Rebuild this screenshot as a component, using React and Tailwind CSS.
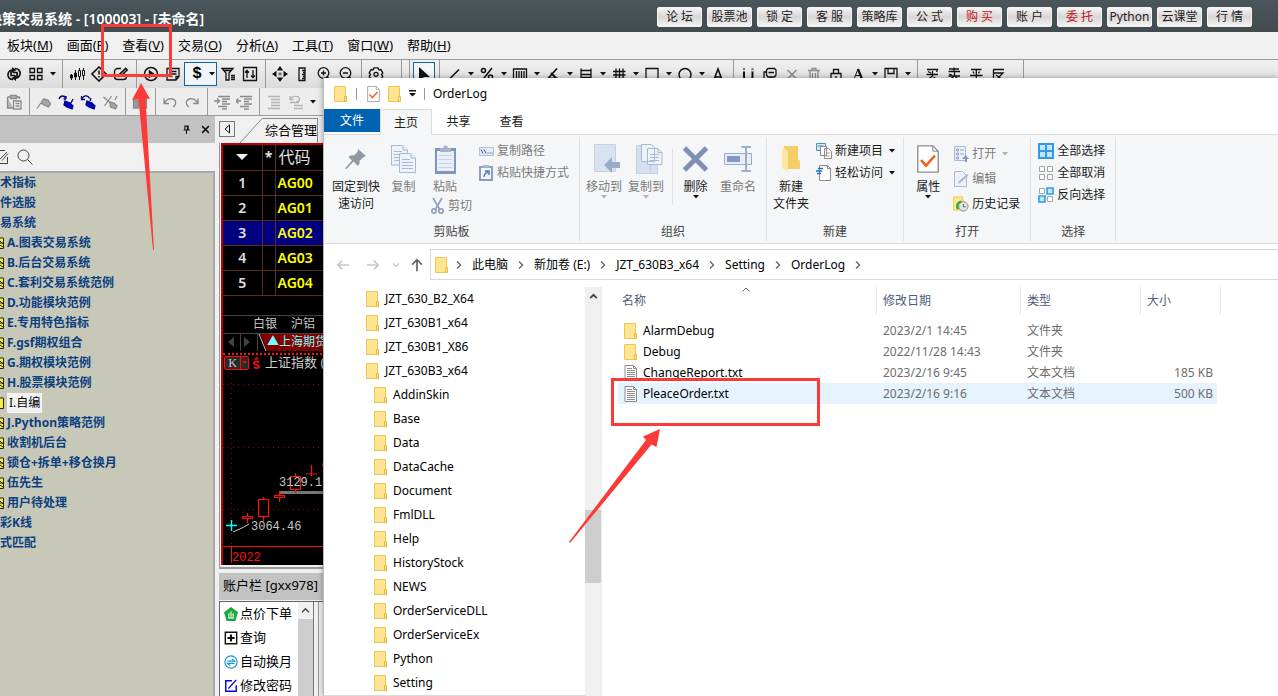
import React from 'react';

/* ---------- icon helpers ---------- */
function Svg({ size = 16, children, className = '', color = '#111', sw = 1.3 }) {
  return (
    <svg
      width={size}
      height={size}
      viewBox="0 0 16 16"
      fill="none"
      stroke={color}
      strokeWidth={sw}
      className={`block shrink-0 ${className}`}
      aria-hidden="true"
    >
      {children}
    </svg>
  );
}

const GREY = '#8a8a8a';
const S = 'none';

const toolIcons = {
  sync: (
    <Svg sw={1.7}>
      <path d="M7 13.500C3.500 13.500 1.500 11 2 8c.5-2.500 2.500-4 5-4M9 2.500c3.500 0 5.500 2.500 5 5.500-.5 2.500-2.500 4-5 4" />
      <path d="M5 4v5.500h4M11 12V6.500H7" />
      <path d="M6 1l4.500 3L6 7zM10 15l-4.500-3L10 9z" fill="#111" stroke={S} />
    </Svg>
  ),
  grid: (
    <Svg>
      <path d="M2 2.500h4.500v4H2zM9.500 2.500H14v4H9.500zM2 9.500h4.500v4H2zM9.500 9.500H14v4H9.500z" />
    </Svg>
  ),
  candles: (
    <Svg sw={1}>
      <path d="M2.500 8v6M6.500 4v10M10.500 2v12M14.500 2v12" />
      <path d="M1.500 9h2v3h-2zM5.500 7h2v4h-2z" fill="#111" />
      <path d="M9.500 4.500h2v6h-2zM13.500 4.500h2v5h-2z" fill="#eee" />
    </Svg>
  ),
  alert: (
    <Svg sw={1.6}>
      <path d="M8 1l7 7-7 7-7-7zM8 4.500v4M8 10v1.600" />
    </Svg>
  ),
  edit: (
    <Svg sw={1.4}>
      <path d="M8 2.500H4.500C3 2.500 1.500 4 1.500 5.500v5c0 2 1 3 3 3h6c2 0 3-1 3-3V9" />
      <path d="M6 10.500l.6-2.300 6-6 1.700 1.700-6 6z" fill="#999" />
    </Svg>
  ),
  play: (
    <Svg sw={1.5}>
      <circle cx="8" cy="8" r="6.500" />
      <path d="M6.500 5l4 3-4 3z" fill="#111" />
    </Svg>
  ),
  note: (
    <Svg>
      <path d="M2 2.500h12v8L11 14H2zM14 10.500h-3V14M4.500 5.500h7M4.500 8h7M4.500 10.500h3" />
    </Svg>
  ),
  filter: (
    <Svg>
      <path d="M2 2.500h11L9 7v7H6V7zM4 4.500h7M11 9.500h4M11 11.500h4M11 13.500h4" />
    </Svg>
  ),
  updown: (
    <Svg>
      <path d="M1.500 1.500h13v13h-13zM5 12V4.500M3 6.500l2-2 2 2M11 4v7.500M9 9.500l2 2 2-2" />
    </Svg>
  ),
  move: (
    <Svg>
      <path
        d="M8 0l3.200 4.500H4.800zM8 16l3.200-4.500H4.800zM0 8l4.500-3.200v6.400zM16 8l-4.500-3.200v6.400z"
        fill="#111"
        stroke={S}
      />
      <path d="M6.500 6.500h3v3h-3z" fill="#777" stroke={S} />
    </Svg>
  ),
  ruler: (
    <Svg>
      <path d="M5 2h6v12.500H5zM8 4.500h3M9 6.500h2M8 8.500h3M9 10.500h2M8 12.500h3" />
    </Svg>
  ),
  zoomin: (
    <Svg>
      <circle cx="7.500" cy="7" r="5.300" />
      <path d="M5 7h5M7.500 4.500v5M11.300 11l3.200 3.500" />
    </Svg>
  ),
  zoomout: (
    <Svg>
      <circle cx="7.500" cy="7" r="5.300" />
      <path d="M5 7h5M11.300 11l3.200 3.500" />
    </Svg>
  ),
  gear: (
    <Svg>
      <path d="M6 1.800h4l.8 2 2-.3 2 3.300L13.500 8.500l1.300 1.800-2 3.200-2-.3-.8 1.800H6l-.8-1.800-2 .3-2-3.200 1.300-1.800L1.200 6.800l2-3.300 2 .3z" />
      <circle cx="8" cy="8.300" r="2" />
    </Svg>
  ),
  cursor: (
    <Svg>
      <path d="M3 1l11 10H8l-5 4z" fill="#111" stroke={S} />
    </Svg>
  ),
  line: (
    <Svg sw={1.6}>
      <path d="M2.500 14L13 3.500" />
    </Svg>
  ),
  percent: (
    <Svg sw={1.6}>
      <circle cx="4.500" cy="4.500" r="2" />
      <circle cx="11.500" cy="11" r="2" />
      <path d="M13 2L3.500 14" />
    </Svg>
  ),
  bars: (
    <Svg>
      <path d="M1.500 13.500V3h13v10.500M4.500 5v9M7 5v9M9.500 5v9M12 5v9" />
    </Svg>
  ),
  angle: (
    <Svg sw={1.8}>
      <path d="M12 2.500L3 12.500h10M6 7l5 5" />
    </Svg>
  ),
  levels: (
    <Svg>
      <path d="M3 2.500v12M13 2.500v12M3 4.500h10M3 8.500h10M3 11.500h10" />
    </Svg>
  ),
  hash: (
    <Svg>
      <path d="M5 2.500v12M8.500 2.500v12M12 2.500v12M2 5.500h12.500M2 9h12.500M2 12.500h12.500" />
    </Svg>
  ),
  rect: (
    <Svg>
      <path d="M2 2.500h12v12H2z" />
    </Svg>
  ),
  circle: (
    <Svg sw={1.5}>
      <circle cx="8" cy="8.500" r="6" />
    </Svg>
  ),
  letter: (
    <Svg sw={1.6}>
      <path d="M3.500 15L8 3l4.500 12M5 11h6" />
    </Svg>
  ),
  magnet: (
    <Svg sw={2}>
      <path d="M4 2.500v8c0 5 8.500 5 8.500 0v-8" />
      <path d="M2.800 4.500h2.500M11.200 4.500h2.500" stroke="#ddd" />
    </Svg>
  ),
  copyminus: (
    <Svg>
      <path d="M6 2.500h6.500l1.500 1.500v5l-1.500 2H6L4.500 9V4zM4.500 6H2v7h7v-2M6.500 6.500h5.500" />
    </Svg>
  ),
  cross: (
    <Svg color={GREY} sw={1.6}>
      <path d="M3.500 4l9 9M12.500 4l-9 9" />
    </Svg>
  ),
  trash: (
    <Svg color={GREY}>
      <path d="M2 4.500h12M6 4.500v-2h4v2M4 4.500v10h8v-10M6.500 7v5M9.500 7v5" />
    </Svg>
  ),
  lock: (
    <Svg>
      <path d="M3 7.500h10v7H3zM5.500 7V3.500h5V7M8 10v2" />
    </Svg>
  ),
  bold: (
    <Svg sw={1}>
      <path d="M2 13.500h4M9 13.500h5M4 13L8 3l4 10M5.500 9.500h5" />
      <path d="M8 3l4 10" strokeWidth="2.200" />
    </Svg>
  ),
  save: (
    <Svg>
      <path d="M2 2.500h12v12H2zM5 3v4.500h6V3" />
    </Svg>
  ),
  buy: (
    <Svg>
      <path d="M3 3.500h10.500L12.500 6M4 5.500l3 1.500M2.500 8.500h11.500M8.500 5v5L3 14M9.500 11l4 3" />
    </Svg>
  ),
  sell: (
    <Svg>
      <path d="M3 3h10M8 1.500v4M2.500 5.500h11.500M3 8l3 1M2.500 10h11.500M8.500 6v4L3 14M9.500 11l4 3" />
    </Svg>
  ),
  flat: (
    <Svg>
      <path d="M3 3.500h10.500M2 9.500h12.500M8.300 3.500v11M5 5.500l1 2M11.500 5.500l-1 2" />
    </Svg>
  ),
  reverse: (
    <Svg>
      <path d="M3 3.500h11M3.500 3.500V14M4 7h9L6 14M6 9l7 5" />
    </Svg>
  ),
  paste: (
    <Svg color={GREY}>
      <path d="M1.500 3h3M10.500 3h3v2M1.500 3v11H7M4.500 1.500h6v3h-6z" fill="#b5b5b5" />
      <path d="M7.500 7h7.500v8H7.500zM9.500 9.500h4M9.500 12h4" fill="#eee" />
    </Svg>
  ),
  flag: (
    <Svg color={GREY}>
      <path d="M1 14.500L8 4.500M7.500 5l4.500 1 2.500 4-2 3-4.500-2-3-2z" fill="#a5a5a5" />
    </Svg>
  ),
  flagblue: (
    <Svg color="#000080">
      <path d="M1 5c1.500-4 6-4 7 0M8 5V2M8 5H5.500" />
      <path d="M7 7l5 2 3 3-1 3-5-2-3-2zM13 9l2-4" fill="#0000c8" />
    </Svg>
  ),
  flagback: (
    <Svg color="#000080">
      <path d="M1.500 2v3.500H5M2 5c1.500-4 6-4 7.500-.5" />
      <path d="M7 7l5 2 3 3-1 3-5-2-3-2zM10 7l1-3" fill="#0000c8" />
    </Svg>
  ),
  flagx: (
    <Svg color={GREY}>
      <path d="M1.500 3l8 7M9.500 2l-7 10M13 6l2-4" />
      <path d="M8 8l4 1 3 3-1.500 3-5-2z" fill="#a5a5a5" />
    </Svg>
  ),
  locker: (
    <Svg color={GREY}>
      <path d="M1.500 6h5v8h-5zM8.500 3h6v11h-6z" fill="#999" />
    </Svg>
  ),
  undo: (
    <Svg color={GREY}>
      <path d="M2 4.500v5h5M2.500 9c2-4.500 8-5.500 10.500-2.500 1.500 2 .5 5-2 6.500" />
    </Svg>
  ),
  redo: (
    <Svg color={GREY}>
      <path d="M14 4.500v5H9M13.500 9c-2-4.500-8-5.500-10.500-2.500-1.500 2-.5 5 2 6.500" />
    </Svg>
  ),
  indent: (
    <Svg color={GREY}>
      <path d="M4 2.500h12M8 5h8M8 7.500h5M8 10h8M4 12.500h9M0 7h5M3 4.500L5.500 7 3 9.500M8 15h5" />
    </Svg>
  ),
  outdent: (
    <Svg color={GREY}>
      <path d="M4 2.500h12M8 5h8M8 7.500h5M8 10h8M4 12.500h9M0 7h5M2.500 4.500L0 7l2.500 2.500M8 15h5" />
    </Svg>
  ),
  lines: (
    <Svg color="#b4b4b4">
      <path d="M2 2.500h12M5 5.500h9M5 8.500h9M5 11.500h9M2 14.500h12" />
    </Svg>
  ),
  revert: (
    <Svg color="#b4b4b4">
      <path d="M2 2v3.500h3.500M2.500 5c2-3.500 9-3.500 9 .5 0 1.500-1 2-3 2M2 8.500h9M6 11.500h9M6 14.500h9" />
    </Svg>
  ),
};

function Caret({ light }) {
  return (
    <svg width="6" height="4" viewBox="0 0 6 4" className="block shrink-0" aria-hidden="true">
      <path d="M0 0h6L3 3.500z" fill={light ? '#b0b0b0' : '#111'} />
    </svg>
  );
}

function Sep() {
  return (
    <div className="flex w-2 shrink-0 justify-center self-stretch">
      <span className="w-px bg-[#9a9a9a]" />
    </div>
  );
}

function Tool({ name }) {
  return (
    <button type="button" aria-label={name} className="flex w-[22px] shrink-0 items-center justify-center self-stretch">
      {toolIcons[name]}
    </button>
  );
}

function ToolCaret() {
  return (
    <button type="button" aria-label="展开" className="flex w-[11px] shrink-0 items-center justify-center self-stretch">
      <Caret />
    </button>
  );
}

function Tools({ items }) {
  return items.map((it, i) => {
    if (it === '|') return <Sep key={i} />;
    if (it === 'v') return <ToolCaret key={i} />;
    return <Tool key={i} name={it} />;
  });
}

/* ---------- trading application ---------- */
const topButtons = ['论 坛', '股票池', '锁 定', '客 服', '策略库', '公 式', '购 买', '账 户', '委 托', 'Python', '云课堂', '行 情'];
const menus = [['板块', 'M'], ['画面', 'P'], ['查看', 'V'], ['交易', 'O'], ['分析', 'A'], ['工具', 'T'], ['窗口', 'W'], ['帮助', 'H']];

function TitleBar() {
  return (
    <header className="flex h-8 shrink-0 items-center bg-linear-to-b from-[#4a565b] to-[#414b50] pt-[2px]">
      <h1 className="-ml-[12px] whitespace-nowrap pt-[2px] text-[14px] font-semibold text-white">决策交易系统 - [100003] - [未命名]</h1>
      <nav className="ml-auto flex gap-[5px] pr-[26px]">
        {topButtons.map((b) => (
          <button
            key={b}
            type="button"
            className={`flex h-5 w-[45px] items-center justify-center whitespace-nowrap rounded-xs border border-[#f4f4f4] bg-linear-to-b from-[#f6f4f4] via-[#d8d5d5] to-[#f4f4f4] text-[12px] ${
              b === '购 买' || b === '委 托' ? 'text-[#c0161c]' : 'text-[#222]'
            }`}
          >
            {b}
          </button>
        ))}
      </nav>
    </header>
  );
}

function MenuBar() {
  return (
    <nav className="flex h-[28px] shrink-0 items-center gap-[14px] border-b border-[#9c9c9c] bg-[#f0f0f0] pl-[7px] text-[13px] text-black">
      {menus.map(([t, k]) => (
        <button key={k} type="button" className="whitespace-nowrap">
          {t}(<span className="underline">{k}</span>)
        </button>
      ))}
    </nav>
  );
}

function Toolbars() {
  return (
    <div className="shrink-0 bg-[#e9e9e9]">
      <div className="flex h-7 items-center bg-linear-to-b from-[#f0f0f0] to-[#dcdcdc] pl-[3px]">
        <Tools items={['sync', 'grid', 'v', '|', 'candles', 'alert', 'edit', '|', 'play', 'note']} />
        <div className="flex h-6 w-[33px] items-center border border-[#0a64ad] bg-[#f2f5f8]">
          <button type="button" className="w-[24px] font-['Liberation_Mono',monospace] text-[16px] font-bold text-black">$</button>
          <Caret />
        </div>
        <Tools items={['filter', 'updown', '|', 'move', 'ruler', 'zoomin', 'zoomout', '|', 'gear']} />
        <div className="flex self-stretch pl-[10px]">
          <Sep />
          <Sep />
        </div>
        <div className="flex h-6 w-[22px] items-center justify-center border border-[#0a64ad] bg-[#f2f5f8]">
          {toolIcons.cursor}
        </div>
        <Tools
          items={[
            '|', 'line', 'v', 'percent', 'v', 'bars', 'v', 'angle', 'v', 'levels', 'v', 'hash', 'v', 'rect', 'v',
            'circle', 'v', 'letter', '|', 'magnet', 'copyminus', 'cross', 'trash', 'lock', 'bold', 'v', 'save', 'v',
            '|', 'buy', 'sell', 'flat', 'reverse',
          ]}
        />
        <div className="flex self-stretch pl-[10px]">
          <Sep />
        </div>
      </div>
      <div className="flex h-7 items-center border-b border-[#9c9c9c] bg-[#ededed] pl-[3px]">
        <Tools
          items={[
            'paste', '|', 'flag', 'flagblue', 'flagback', 'flagx', '|', 'locker', '|', 'undo', 'redo', '|',
            'indent', 'outdent', '|', 'lines', 'revert', 'v',
          ]}
        />
      </div>
    </div>
  );
}

const strategies = [
  ['术指标'], ['件选股'], ['易系统'],
  ['A.图表交易系统', 1], ['B.后台交易系统', 1], ['C.套利交易系统范例', 1], ['D.功能模块范例', 1],
  ['E.专用特色指标', 1], ['F.gsf期权组合', 1], ['G.期权模块范例', 1], ['H.股票模块范例', 1],
  ['I.自编', 2], ['J.Python策略范例', 1], ['收割机后台', 1], ['锁仓+拆单+移仓换月', 1], ['伍先生', 1],
  ['用户待处理', 1], ['彩K线'], ['式匹配'],
];

function TreeMark({ open }) {
  return (
    <svg width="5" height="12" viewBox="0 0 5 12" className="mr-[2px] block shrink-0" aria-hidden="true">
      <path d="M0 1h3.500v10.500H0" fill="#f6ee3c" stroke="#222" />
      {!open && <path d="M0 4l3 3M0 8l3 2M0 6h3" stroke="#222" strokeWidth="1" />}
    </svg>
  );
}

function StrategyTree() {
  return (
    <aside className="flex w-[215px] shrink-0 flex-col">
      <div className="flex h-[27px] shrink-0 items-center justify-end gap-[10px] bg-[#c2c2c2] pr-[5px]">
        <button type="button" aria-label="固定">
          <Svg size={9} sw={1.8}><path d="M3 9h11M5 9V2h6v7M9.500 2v7M8 9v7" /></Svg>
        </button>
        <button type="button" aria-label="关闭">
          <Svg size={9} sw={2.600}><path d="M2 2l12 12M14 2L2 14" /></Svg>
        </button>
      </div>
      <div className="flex h-[28px] shrink-0 items-center gap-2 bg-[#f0f0f0]">
        <svg width="9" height="16" viewBox="0 0 9 16" fill="none" stroke="#444" aria-hidden="true">
          <path d="M0 1.500h5M7.500 8v6.500H0M0 10l7-7M2 11.500l6-7" />
        </svg>
        <Svg color="#444" sw={1}><circle cx="6.500" cy="6.500" r="5.500" /><path d="M10.500 10.500l5 5" /></Svg>
      </div>
      <ul className="min-h-0 flex-1 overflow-hidden border-r-2 border-t-2 border-[#a8a8a8] bg-[#c8c8b8] text-[12px] font-bold text-[#0a3f80]">
        {strategies.map(([name, kind]) => (
          <li key={name} className="flex h-5 items-center whitespace-nowrap">
            {kind && <TreeMark open={kind === 2} />}
            <span className={kind === 2 ? 'bg-[#f2f2f2] px-[2px] leading-5 font-normal text-black' : ''}>
              {name}
            </span>
          </li>
        ))}
      </ul>
    </aside>
  );
}

const contracts = ['AG00', 'AG01', 'AG02', 'AG03', 'AG04'];

function QuoteTable() {
  return (
    <table className="w-full table-fixed border-collapse text-[14px]">
      <colgroup>
        <col className="w-[39px]" />
        <col className="w-[13px]" />
        <col />
      </colgroup>
      <thead>
        <tr className="h-[25px] text-[#e0e0e0]">
          <th className="border-b border-r border-[#5a3018] p-0">
            <svg width="12" height="6" viewBox="0 0 12 6" className="mx-auto" aria-label="排序"><path d="M0 0h12L6 6z" fill="#eee" /></svg>
          </th>
          <th className="border-b border-r border-[#5a3018] p-0 leading-none">*</th>
          <th className="border-b border-[#5a3018] p-0 pl-[3px] text-left text-[16px] leading-none font-normal">代码</th>
        </tr>
      </thead>
      <tbody>
        {contracts.map((c, i) => (
          <tr key={c} className={`h-[25px] ${i === 2 ? 'bg-[#000080]' : ''}`}>
            <td className="border-b border-r border-[#5a3018] p-0 text-center leading-none font-semibold text-[#e0e0e0]">{i + 1}</td>
            <td className="border-b border-r border-[#5a3018] p-0" />
            <td className="border-b border-[#5a3018] p-0 pl-[2px] leading-none font-semibold text-[#ffff00]">{c}</td>
          </tr>
        ))}
      </tbody>
    </table>
  );
}

function IndexChart() {
  return (
    <svg width="100%" height="194" className="block font-['Liberation_Mono',monospace] text-[12px]" aria-label="上证指数">
      <g stroke="#a00000" strokeDasharray="1 4">
        <path d="M8.500 2v188M0 13.500h1000M0 76.500h1000M0 138.500h1000" />
      </g>
      <path d="M56 120h900v3H56z" fill="#777" />
      <g stroke="#ff1010" strokeWidth="1.200" fill="#000">
        <path d="M24.500 142v10M40.500 126v24M56.500 120v11M72.500 102v20M88.500 94v11M83 103h11M100 92v4" />
        <path d="M19.500 145.500h10v2h-10zM35.500 128.500h10v17h-10zM51.500 124.500h10v2h-10zM67.500 105.500h10v13h-10z" />
      </g>
      <path d="M0 175.500h1000M8.500 176v16" stroke="#ff1010" />
      <path d="M3 154.500h11M8.500 149v11" stroke="#00ffff" strokeWidth="1.500" />
      <path d="M10 161l9-4 7-4" stroke="#ccc" fill="none" />
      <text x="56" y="115" fill="#c8c8c8">3129.1</text>
      <text x="28" y="159" fill="#c8c8c8">3064.46</text>
      <text x="9" y="190" fill="#ff1010">2022</text>
    </svg>
  );
}

function MarketPane() {
  return (
    <section className="shrink-0">
      <div className="flex h-[27px] items-end bg-[#f0f0f0]">
        <button type="button" aria-label="向左" className="mb-[6px] flex h-4 w-4 items-center justify-center border border-[#777] bg-[#f0f0f0]">
          <svg width="6" height="10" viewBox="0 0 6 10" fill="none" stroke="#111"><path d="M5.500 1v8L1 5z" /></svg>
        </button>
        <svg width="30" height="25" viewBox="0 0 30 25" fill="none" stroke="#888" aria-hidden="true"><path d="M5 25L27 .5h3" /></svg>
        <button type="button" className="flex h-[25px] items-center whitespace-nowrap border-t border-r border-[#888] text-[13px] text-black">综合管理</button>
      </div>
      <div className="border-b-2 border-l border-[#999] pb-[2px] pl-px">
        <div className="overflow-hidden border-t-2 border-l-2 border-[#c00000] bg-black">
          <QuoteTable />
          <div className="h-5 border-b border-[#444]" />
          <div className="flex h-[18px] items-center gap-[14px] border-b border-[#444] pl-[30px] text-[12px] text-[#c8c8c8]">
            <span className="whitespace-nowrap">白银</span>
            <span className="whitespace-nowrap">沪铝</span>
          </div>
          <div className="flex h-[17px] text-[#333]">
            <svg width="35" height="17" fill="none" className="block shrink-0" aria-hidden="true">
              <path d="M5 8l6-5v10zM27 8l-6-5v10z" fill="#444" />
              <path d="M17.500 0v17M34.500 0v17" stroke="#444" />
            </svg>
            <svg width="9" height="17" className="block shrink-0" aria-hidden="true">
              <path d="M2 0h7v17z" fill="#800000" /><path d="M1 0l7 17" stroke="#ccc" />
            </svg>
            <span className="flex flex-1 items-center whitespace-nowrap bg-[#800000] text-[12px] leading-none text-[#7ff]">▲上海期货</span>
          </div>
          <div className="mt-[2px] flex h-[18px] items-center border-t-2 border-dotted border-[#ff1010] pl-px">
            <button type="button" className="flex h-[14px] items-center rounded-xs border border-[#f01010] bg-[#2a2a2a] font-['Liberation_Serif',serif] text-[12px] leading-none text-[#ccc]">
              <span className="w-[15px]">K</span>
              <span className="flex h-full w-2 items-center justify-center border-l border-[#f01010]">
                <svg width="5" height="3"><path d="M0 0h5L2.500 3z" fill="#f01010" /></svg>
              </span>
            </button>
            <svg width="7" height="12" viewBox="0 0 7 12" fill="none" stroke="#ff1010" className="mx-1 block shrink-0" aria-hidden="true">
              <path d="M3.500 0l3 2.500h-6z" fill="#ff1010" stroke="none" />
              <path d="M6 5.500C5 4 1 4 1 6s5 1.500 5 3.500S2 11.500 1 10" strokeWidth="1.800" />
            </svg>
            <span className="whitespace-nowrap pl-px text-[13px] leading-none text-[#ccc]">上证指数 (日线)</span>
          </div>
          <IndexChart />
        </div>
      </div>
    </section>
  );
}

const accountItems = [
  ['点价下单', <Svg key="a" size={14} className="shrink-0"><path d="M8 0l8 6-3 10H3L0 6z" fill="#18a83c" stroke="none" /><path d="M4.500 12.500h7M5.500 7v4M8 5v6M10.500 7v4" stroke="#fff" /></Svg>],
  ['查询', <Svg key="b" size={14} sw={1.6}><path d="M1.500 1.500h13v13h-13z" /><path d="M4 8h8M8 4v8" strokeWidth="2.400" /></Svg>],
  ['自动换月', <Svg key="c" size={14} color="#1296db"><circle cx="8" cy="8" r="7" /><path d="M4 7h8l-3-2.500M12 9.500H4L7 12" /></Svg>],
  ['修改密码', <Svg key="d" size={14} color="#0000e0" sw={1.6}><path d="M9 2H2v12h12V7M5 11l9-10" /></Svg>],
];

function AccountPane() {
  return (
    <section className="flex min-h-0 flex-1 flex-col pt-1">
      <h2 className="flex h-[27px] shrink-0 items-center whitespace-nowrap bg-[#c2c2c2] pl-1 text-[13px] text-black">账户栏 [gxx978]</h2>
      <div className="mt-px flex min-h-0 flex-1 border-t border-l border-[#666]">
        <ul className="w-[78px] shrink-0 overflow-hidden bg-white text-[13px] text-black">
          {accountItems.map(([name, icon]) => (
            <li key={name} className="flex h-6 items-center gap-[2px] whitespace-nowrap pl-1">
              {icon}
              {name}
            </li>
          ))}
        </ul>
        <div className="flex w-4 shrink-0 flex-col border-r border-[#777] bg-[#cdcdcd]">
          <span className="flex h-[17px] items-center justify-center bg-[#f0f0f0]">
            <Svg size={9} color="#444" sw={2.500}><path d="M2 11l6-6 6 6" /></Svg>
          </span>
        </div>
        <div className="ml-1 flex-1 border-l border-[#999]" />
      </div>
    </section>
  );
}

/* ---------- file explorer ---------- */
function Folder({ className = '' }) {
  return (
    <svg width="14" height="16" viewBox="0 0 14 16" className={`block shrink-0 ${className}`} aria-hidden="true">
      <path d="M.5.5h11v15H.5z" fill="#ffe591" stroke="#ecc94e" />
      <path d="M10.500 10.500h2v5h-2z" fill="#ffe08a" stroke="#e6bd3a" />
    </svg>
  );
}

function TextFile() {
  return (
    <svg width="14" height="16" viewBox="0 0 14 16" fill="none" stroke="#8b8b8b" className="block shrink-0" aria-hidden="true">
      <path d="M1 .5h8.500l3 3v12H1z" fill="#fff" />
      <path d="M9.500.5v3h3M3 3.500h5M3 5.500h8M3 7.500h8M3 9.500h8M3 11.500h8M3 13.500h8" />
    </svg>
  );
}

function Page({ w = 14, h = 16, check }) {
  return (
    <svg width={w} height={h} viewBox="0 0 22 28" fill="none" className="block shrink-0" aria-hidden="true">
      <path d="M.8.800h15l5.400 5.400v21H.8z" fill="#fff" stroke="#8b8b8b" strokeWidth="1.300" />
      <path d="M15.800.800v5.400h5.400" stroke="#8b8b8b" />
      {check && <path d="M4 15l5 5.500 9-10" stroke="#f1601c" strokeWidth="2.600" />}
    </svg>
  );
}

const ribbonIcons = {
  pin: (
    <svg width="22" height="22" viewBox="0 0 22 22"><path d="M13 1l8 7-3 1.500-3.500 3.500c.5 2-.5 4-1.500 5l-4.500-4.500L1.500 21 0 20.500l7-8L3.500 9C5 7.500 7 7 9 7.500L12.500 4z" fill="#8f99a3" /></svg>
  ),
  copy: (
    <svg width="25" height="28" viewBox="0 0 25 28" fill="#eef3fa" stroke="#a9b8d3">
      <path d="M.5.500H12l4.500 4.500v15H.5z" /><path d="M12 .5V5h4.500M3 6.500h8M3 9.500h8M3 12.500h8M3 15.500h8" />
      <path d="M8.500 8.500H20l4.500 4.500v14.500h-16z" /><path d="M20 8.500V13h4.500M11 14.500h8M11 17.500h11M11 20.500h11M11 23.500h11" />
    </svg>
  ),
  paste: (
    <svg width="21" height="29" viewBox="0 0 21 29"><path d="M0 3h21v26H0z" fill="#7f95bc" /><path d="M2 6h17v20H2z" fill="#e9eff8" /><path d="M5 3h3a2.500 2.500 0 015 0h3v4H5z" fill="#a7b4ca" /><path d="M4 10.500h13M4 14.500h13M4 18.500h13M4 22.500h13" stroke="#c3d0e4" /></svg>
  ),
  moveTo: (
    <svg width="36" height="30" viewBox="-8 0 36 30"><path d="M.5.500h21v27H.5z" fill="#d8e2f1" stroke="#c3d0e6" /><path d="M10 21l8-8v5h8v6h-8v5z" fill="#9aacca" /></svg>
  ),
  copyTo: (
    <svg width="33" height="30" viewBox="-6 0 33 30"><path d="M.5 1.500h14v28H.5zM14.500 18.500h7v11h-7z" fill="#d5dfef" stroke="#c3d0e6" /><path d="M5.500.500h10l3 3v14h-13zM11.500 4.500H22l4 4v12h-14.500z" fill="#eef3fa" stroke="#a9b8d3" /><path d="M14 10.500h9M14 13.500h9M14 16.500h9M22 4.500v4h4" stroke="#a9b8d3" fill="none" /></svg>
  ),
  remove: (
    <svg width="25" height="26" viewBox="0 0 25 26" fill="none"><path d="M1.500 2l22 22M23.500 2l-22 22" stroke="#7f90b2" strokeWidth="5" /></svg>
  ),
  rename: (
    <svg width="28" height="26" viewBox="0 0 28 26" fill="none" stroke="#9aaccb"><path d="M.5 7.500h27v11H.5z" fill="#e7eef9" /><path d="M3 10h13v6H3z" fill="#8199c4" stroke="none" /><path d="M17.500 1h3.500c1 0 1 2 1 2V23s0 2-1 2h-3.500M27 1h-4c-1 0-1 2-1 2M27 25h-4c-1 0-1-2-1-2" strokeWidth="2" /></svg>
  ),
  newFolder: (
    <svg width="20" height="28" viewBox="0 0 20 28"><path d="M3 1h14v13l2 2v8H3z" fill="#f5cf66" /><path d="M1 2l6 4v21l-6-4z" fill="#ffe9a2" /></svg>
  ),
  path: (
    <svg width="15" height="9" viewBox="0 0 15 9" fill="none"><path d="M.5.500h14v8H.5z" fill="#e3ebf7" stroke="#b0bed6" /><path d="M2 2.500l2 4M5 2.500l2 4M8.500 6h1M10.500 6h1M12.500 6h1" stroke="#42597f" /></svg>
  ),
  shortcut: (
    <svg width="14" height="16" viewBox="0 0 14 16" fill="none"><path d="M0 1h14v15H0z" fill="#8b9fc2" /><path d="M2 3h10v11H2z" fill="#f0f5fb" /><path d="M4 0h6v3H4z" fill="#a7b4ca" /><path d="M5 12c0-3 1-4 4-5M6 6h4v4" stroke="#5e7aae" strokeWidth="1.500" /></svg>
  ),
  cut: (
    <svg width="13" height="16" viewBox="0 0 13 16" fill="none" stroke="#8ea0c0" strokeWidth="1.700"><path d="M2 0l6.500 11M11 0L4.500 11" /><circle cx="3" cy="13" r="2.200" /><circle cx="10" cy="13" r="2.200" /></svg>
  ),
  newItem: (
    <svg width="16" height="16" viewBox="0 0 16 16" fill="#fff" stroke="#8b8b8b"><path d="M.5.500h9v7h-9z" fill="#cfe6f3" stroke="#4b93b5" /><path d="M2 3h5" stroke="#4b93b5" /><path d="M4.500 3.500h6v9h-6zM8.500 5.500h4l3 3v7h-7z" /><path d="M10 10h4M10 13h4" stroke="#e58c8c" /></svg>
  ),
  easyAccess: (
    <svg width="16" height="16" viewBox="0 0 16 16" fill="none"><path d="M3.500.500h8l3 3v12h-11z" fill="#fff" stroke="#8b8b8b" /><path d="M11.500.500v3h3" stroke="#8b8b8b" /><path d="M2 3.500h5M0 6h6M1 8.500h4" stroke="#1e6fc0" strokeWidth="1.400" /></svg>
  ),
  open: (
    <svg width="15" height="16" viewBox="0 0 15 16" fill="none"><path d="M.5.500h11v14H.5z" fill="#edf2f9" stroke="#a9b8d3" /><path d="M2.500 3h2v2h-2zM2.500 7h2v2h-2zM2.500 11h2v2h-2zM6 4h4M6 8h4" stroke="#8fa2c6" /><path d="M11 16v-3H8l3.500-4L15 13h-2v3z" fill="#8298c0" /></svg>
  ),
  editFile: (
    <svg width="15" height="16" viewBox="0 0 15 16" fill="none"><path d="M.5.500h8l4 4v11H.5z" fill="#edf2f9" stroke="#a9b8d3" /><path d="M4 13l1-3 8-7 1.500 1.500-8 7z" fill="#a9b8d3" /></svg>
  ),
  history: (
    <svg width="17" height="16" viewBox="0 0 17 16" fill="none"><path d="M.5.500h10v14h-10z" fill="#ffe591" stroke="#ecc94e" /><circle cx="11" cy="10.500" r="5" fill="#e5e5e5" stroke="#888" /><path d="M11 8v3h2.500" stroke="#555" /><path d="M9 5.500c-4 .5-6 4-3.500 8" stroke="#2fae38" strokeWidth="2.600" /></svg>
  ),
  selectAll: (
    <svg width="16" height="16" viewBox="0 0 16 16"><path d="M0 0h16v16H0z" fill="#2f9be8" /><path d="M2 2h5v5H2zM9 2h5v5H9zM2 9h5v5H2zM9 9h5v5H9z" fill="#c4e6fd" /></svg>
  ),
  selectNone: (
    <svg width="16" height="16" viewBox="0 0 16 16" fill="#fff" stroke="#a3a3a3"><path d="M1.500 1.500h5v5h-5zM9.500 1.500h5v5h-5zM1.500 9.500h5v5h-5zM9.500 9.500h5v5h-5z" /></svg>
  ),
  invert: (
    <svg width="16" height="16" viewBox="0 0 16 16"><path d="M1.500 1.500h5v5h-5zM9.500 9.500h5v5h-5z" fill="#fff" stroke="#a3a3a3" /><path d="M9 1h6v6H9zM1 9h6v6H1z" fill="#c4e6fd" stroke="#2f9be8" strokeWidth="1.600" /></svg>
  ),
  props: <Page w={22} h={28} check />,
};

function BigButton({ icon, lines, dim, caret, className = '' }) {
  return (
    <button type="button" className={`flex flex-col items-center ${dim ? 'text-[#7b7b7b]' : 'text-[#1a1a1a]'} ${className}`}>
      <span className="mb-[3px] flex h-[32px] items-center">{ribbonIcons[icon]}</span>
      {lines.map((l) => (
        <span key={l} className="whitespace-nowrap leading-[17px]">{l}</span>
      ))}
      {caret && <Caret light={dim} />}
    </button>
  );
}

function SmallButton({ icon, label, dim, caret }) {
  return (
    <button type="button" className={`flex items-center gap-[3px] whitespace-nowrap leading-4 ${dim ? 'text-[#7b7b7b]' : 'text-[#1a1a1a]'}`}>
      <span className="flex w-4 justify-center">{ribbonIcons[icon]}</span>
      {label}
      {caret && <span className="pl-[3px]"><Caret light={dim} /></span>}
    </button>
  );
}

function Group({ label, className = '', children }) {
  return (
    <section className="my-[2px] flex flex-col border-r border-[#e0e1e2]">
      <div className={`flex flex-1 items-start pt-[6px] ${className}`}>{children}</div>
      <h3 className="pb-px text-center leading-[16px] text-[#444]">{label}</h3>
    </section>
  );
}

function Ribbon() {
  return (
    <div className="flex h-[109px] shrink-0 overflow-hidden border-b border-[#dadbdc] bg-[#f5f6f7]">
      <Group label="剪贴板" className="pl-2 pr-[10px]">
        <BigButton icon="pin" lines={['固定到快', '速访问']} />
        <BigButton icon="copy" lines={['复制']} dim className="ml-[11px]" />
        <div className="ml-[13px] flex flex-col gap-[3px]">
          <BigButton icon="paste" lines={['粘贴']} dim className="w-8" />
          <SmallButton icon="cut" label="剪切" dim />
        </div>
        <div className="ml-[6px] flex flex-col gap-[6px]">
          <SmallButton icon="path" label="复制路径" dim />
          <SmallButton icon="shortcut" label="粘贴快捷方式" dim />
        </div>
      </Group>
      <Group label="组织" className="pl-[6px] pr-[10px]">
        <BigButton icon="moveTo" lines={['移动到']} dim caret />
        <BigButton icon="copyTo" lines={['复制到']} dim caret className="ml-[6px]" />
        <span className="mx-2 mt-[6px] h-14 w-px bg-[#e0e1e2]" />
        <BigButton icon="remove" lines={['删除']} caret className="ml-[2px]" />
        <BigButton icon="rename" lines={['重命名']} dim className="ml-3" />
      </Group>
      <Group label="新建" className="pl-[6px] pr-2">
        <BigButton icon="newFolder" lines={['新建', '文件夹']} />
        <div className="ml-[7px] flex flex-col gap-[6px]">
          <SmallButton icon="newItem" label="新建项目" caret />
          <SmallButton icon="easyAccess" label="轻松访问" caret />
        </div>
      </Group>
      <Group label="打开" className="pl-3 pr-[10px]">
        <BigButton icon="props" lines={['属性']} caret />
        <div className="ml-[13px] flex flex-col gap-[9px] pt-[3px]">
          <SmallButton icon="open" label="打开" dim caret />
          <SmallButton icon="editFile" label="编辑" dim />
          <SmallButton icon="history" label="历史记录" />
        </div>
      </Group>
      <Group label="选择" className="pl-[7px] pr-[10px]">
        <div className="flex flex-col gap-[6px]">
          <SmallButton icon="selectAll" label="全部选择" />
          <SmallButton icon="selectNone" label="全部取消" />
          <SmallButton icon="invert" label="反向选择" />
        </div>
      </Group>
    </div>
  );
}

function Chevron() {
  return (
    <svg width="6" height="8" viewBox="0 0 6 8" fill="none" stroke="#666" strokeWidth="1.400" className="mx-[10px] block shrink-0" aria-hidden="true">
      <path d="M1 .5L4.500 4 1 7.500" />
    </svg>
  );
}

const crumbs = ['此电脑', '新加卷 (E:)', 'JZT_630B3_x64', 'Setting', 'OrderLog'];

function AddressBar() {
  return (
    <div className="flex shrink-0 items-center pt-[5px]">
      <div className="flex w-[106px] shrink-0 items-center pl-3">
        <button type="button" aria-label="后退"><Svg size={14} color="#c8c8c8" sw={1.8}><path d="M15 8H2M7 3L2 8l5 5" /></Svg></button>
        <button type="button" aria-label="前进" className="ml-4"><Svg size={14} color="#c8c8c8" sw={1.8}><path d="M1 8h13M9 3l5 5-5 5" /></Svg></button>
        <button type="button" aria-label="最近" className="ml-3"><Svg size={8} color="#c8c8c8" sw={2.500}><path d="M2 5l6 6 6-6" /></Svg></button>
        <button type="button" aria-label="向上" className="ml-[10px]"><Svg size={14} color="#666" sw={2}><path d="M8 15V2M2.500 7.500L8 2l5.500 5.500" /></Svg></button>
      </div>
      <nav className="flex h-[31px] flex-1 items-center whitespace-nowrap border border-r-0 border-[#d9d9d9] pl-1 text-black">
        <Folder className="-mr-[3px]" />
        <Chevron />
        {crumbs.map((c) => (
          <React.Fragment key={c}>
            <a href="#" className="text-black">{c}</a>
            <Chevron />
          </React.Fragment>
        ))}
      </nav>
    </div>
  );
}

const roots = ['JZT_630_B2_X64', 'JZT_630B1_x64', 'JZT_630B1_X86', 'JZT_630B3_x64'];
const children = ['AddinSkin', 'Base', 'Data', 'DataCache', 'Document', 'FmlDLL', 'Help', 'HistoryStock', 'NEWS', 'OrderServiceDLL', 'OrderServiceEx', 'Python', 'Setting'];

function NavPane() {
  return (
    <div className="flex w-[278px] shrink-0 border-r border-[#eee]">
      <ul className="flex-1 overflow-hidden border-b border-[#d9d9d9] text-black">
        {[...roots, ...children].map((n, i) => (
          <li key={n} className={`flex h-6 items-center gap-[5px] ${i < roots.length ? 'pl-[42px]' : 'pl-[50px]'}`}>
            <Folder />
            {n}
          </li>
        ))}
      </ul>
      <div className="flex w-4 flex-col bg-[#f0f0f0]">
        <span className="flex h-[18px] items-center justify-center">
          <Svg size={9} color="#444" sw={3}><path d="M2 11l6-6 6 6" /></Svg>
        </span>
        <span className="grow-205" />
        <span className="h-[73px] bg-[#cdcdcd]" />
        <span className="grow-113" />
      </div>
    </div>
  );
}

const files = [
  ['AlarmDebug', '2023/2/1 14:45', '文件夹', ''],
  ['Debug', '2022/11/28 14:43', '文件夹', ''],
  ['ChangeReport.txt', '2023/2/16 9:45', '文本文档', '185 KB'],
  ['PleaceOrder.txt', '2023/2/16 9:16', '文本文档', '500 KB'],
];

function FileList() {
  return (
    <div className="min-w-0 flex-1 pl-4">
      <table className="table-fixed border-separate border-spacing-0 whitespace-nowrap text-left">
        <colgroup>
          <col className="w-[259px]" />
          <col className="w-[144px]" />
          <col className="w-[120px]" />
          <col className="w-[80px]" />
        </colgroup>
        <thead>
          <tr className="h-7 text-[#4c607a]">
            <th className="relative border-r border-[#e5e5e5] p-0 pl-1 font-normal">
              名称
              <svg width="8" height="5" viewBox="0 0 8 5" fill="none" stroke="#666" className="absolute top-0 left-[124px]" aria-hidden="true"><path d="M.5 4.500L4 1l3.500 3.500" /></svg>
            </th>
            <th className="border-r border-[#e5e5e5] p-0 pl-[6px] font-normal">修改日期</th>
            <th className="border-r border-[#e5e5e5] p-0 pl-[6px] font-normal">类型</th>
            <th className="border-r border-[#e5e5e5] p-0 pl-[6px] font-normal">大小</th>
          </tr>
        </thead>
        <tbody>
          <tr className="h-[5px]" aria-hidden="true"><td className="p-0" /></tr>
          {files.map(([n, d, t, s], i) => (
            <tr key={n} className={`h-[21px] text-[#6d6d6d] ${i === 3 ? 'bg-[#e5f3ff]' : ''}`}>
              <td className="p-0 pl-[6px] text-black">
                <span className="flex items-center gap-[5px]">{i < 2 ? <Folder /> : <TextFile />}{n}</span>
              </td>
              <td className="p-0 pl-[6px]">{d}</td>
              <td className="p-0 pl-[6px]">{t}</td>
              <td className="border-r-4 border-white p-0 pr-1 text-right">{s}</td>
            </tr>
          ))}
        </tbody>
      </table>
    </div>
  );
}

function Explorer() {
  return (
    <main className="absolute top-[78px] right-0 bottom-0 left-[323px] flex flex-col overflow-hidden border-l border-[#bbb] bg-white text-[12px] shadow-[0_0_6px_rgba(0,0,0,0.35)]">
      <div className="flex h-[31px] shrink-0 items-center pl-[10px]">
        <Folder />
        <span className="mx-2 h-3 w-px bg-[#999]" />
        <span className="ml-px flex w-[14px] justify-center"><Page w={13} h={16} check /></span>
        <Folder className="ml-[8px]" />
        <svg width="7" height="7" className="ml-[7px] block" aria-hidden="true"><path d="M0 0h7v1.500H0zM0 3h7L3.500 6.500z" fill="#111" /></svg>
        <span className="mx-[8px] h-3 w-px bg-[#999]" />
        <h2 className="text-black">OrderLog</h2>
      </div>
      <div className="flex h-[26px] shrink-0 border-b border-[#dadbdc] text-[#1a1a1a]">
        <button type="button" className="mb-[2px] w-14 bg-[#0063b1] text-white">文件</button>
        <button type="button" className="-mb-px w-[52px] border border-b-0 border-[#dadbdc] bg-[#f5f6f7]">主页</button>
        <button type="button" className="w-[53px]">共享</button>
        <button type="button" className="w-[53px]">查看</button>
      </div>
      <Ribbon />
      <AddressBar />
      <div className="mt-[7px] flex min-h-0 flex-1">
        <NavPane />
        <FileList />
      </div>
    </main>
  );
}

/* ---------- annotation overlay ---------- */
function Annotations() {
  return (
    <div className="pointer-events-none absolute inset-0">
      <div className="absolute top-[24px] left-[101px] h-[53px] w-[71px] border-3 border-[#fc3a38]" />
      <div className="absolute top-[378px] left-[611px] h-[48px] w-[209px] border-3 border-[#fc3a38]" />
      <svg width="100%" height="100%" className="absolute inset-0" aria-hidden="true">
        <path d="M141 83l9 16-4.500-.5L154 250h-1L138.500 99l-6.500 1z" fill="#fc3a38" />
        <path d="M660 429l-3.500 18-5-2.500L570 543l-1-1 77-102-3-3.500z" fill="#fc3a38" />
      </svg>
    </div>
  );
}

export default function App() {
  return (
    <div className="relative flex h-screen flex-col overflow-hidden bg-[#f0f0f0] font-['Noto_Sans','Noto_Sans_CJK_SC',sans-serif]">
      <TitleBar />
      <MenuBar />
      <Toolbars />
      <div className="flex min-h-0 flex-1">
        <StrategyTree />
        <div className="ml-1 flex min-w-0 flex-1 flex-col">
          <MarketPane />
          <AccountPane />
        </div>
      </div>
      <Explorer />
      <Annotations />
    </div>
  );
}
